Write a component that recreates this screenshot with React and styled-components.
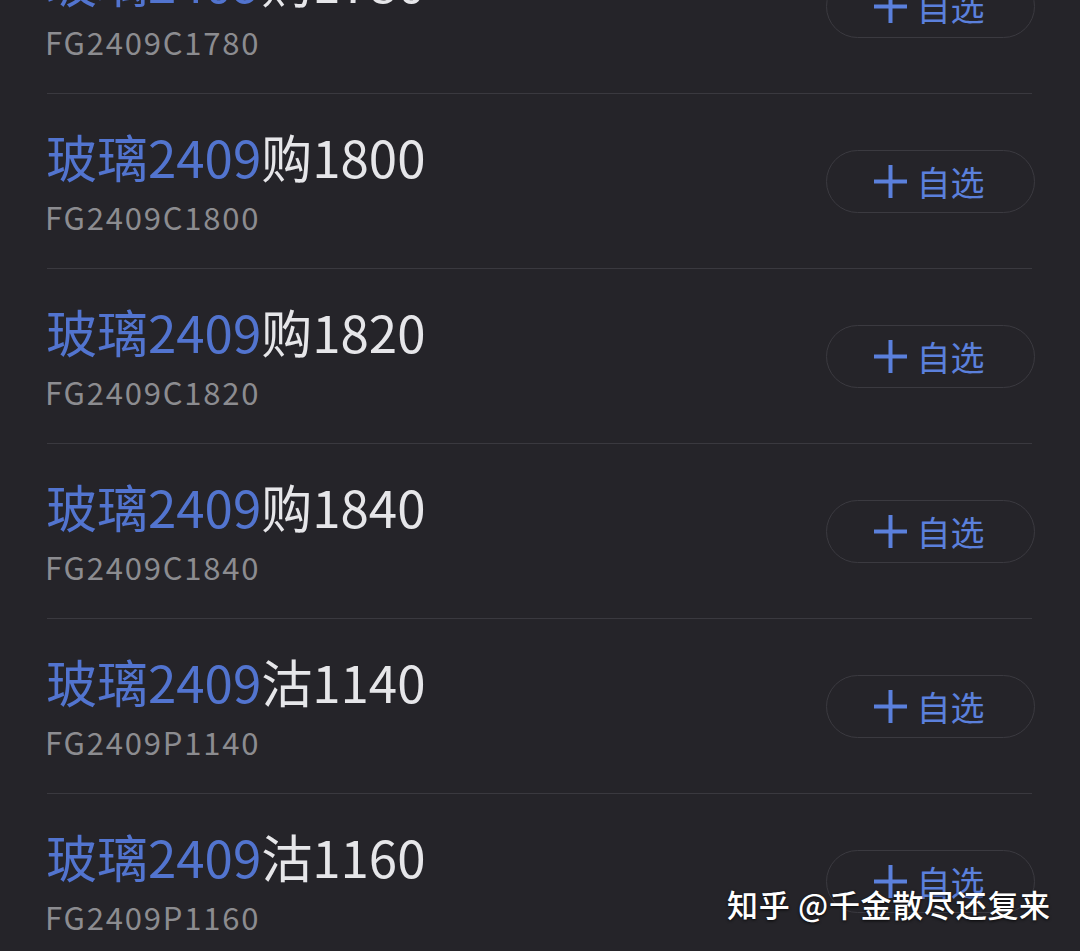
import React from "react";
import styled, { createGlobalStyle } from "styled-components";

const Global = createGlobalStyle`
  html, body { margin: 0; padding: 0; background: #252429; }
  body { overflow: hidden; font-family: "Noto Sans CJK SC", "Noto Sans", sans-serif; }
`;

const Page = styled.div`
  position: relative;
  width: 1080px;
  height: 951px;
  overflow: hidden;
  background: #252429;
`;

const List = styled.div`
  display: flex;
  flex-direction: column;
  margin-top: -81px;
`;

const Row = styled.div`
  display: flex;
  align-items: center;
  justify-content: space-between;
  height: 174px;
  padding: 0 45px 0 46px;
  box-sizing: border-box;
`;

const Divider = styled.div`
  height: 1px;
  margin: 0 48px 0 47px;
  background: #3a393f;
`;

const Info = styled.div`
  display: flex;
  flex-direction: column;
  gap: 17px;
`;

const Title = styled.div`
  font-size: 51px;
  line-height: 54px;
  color: #e6e6e9;
  white-space: nowrap;
`;

const Accent = styled.span`
  color: #5274cf;
`;

const Code = styled.div`
  font-size: 31px;
  line-height: 34px;
  color: #8c8c90;
  letter-spacing: 1.8px;
  margin-left: -1px;
`;

const AddButton = styled.button`
  display: flex;
  align-items: center;
  justify-content: center;
  gap: 9px;
  width: 209px;
  height: 63px;
  border-radius: 32px;
  border: 1.5px solid #3b3a40;
  background: transparent;
  color: #5b80dc;
  font-family: "Noto Sans CJK SC", sans-serif;
  font-size: 34px;
  padding: 0 4px 0 0;
  box-sizing: border-box;
`;

const Watermark = styled.div`
  position: absolute;
  left: 727px;
  top: 884px;
  font-size: 31px;
  font-weight: 500;
  line-height: 40px;
  color: #ffffff;
  white-space: nowrap;
  text-shadow: 0 1px 3px rgba(0,0,0,0.8);
  letter-spacing: 0.7px;
`;

const Plus = () => (
  <svg width="35" height="35" viewBox="0 0 35 35">
    <path d="M17.5 1V34M1 17.5H34" stroke="#5b80dc" strokeWidth="4" fill="none" />
  </svg>
);

const items = [
  ["购", "1780", "FG2409C1780"],
  ["购", "1800", "FG2409C1800"],
  ["购", "1820", "FG2409C1820"],
  ["购", "1840", "FG2409C1840"],
  ["沽", "1140", "FG2409P1140"],
  ["沽", "1160", "FG2409P1160"],
];

export default function App() {
  return (
    <Page>
      <Global />
      <List>
        {items.map(([t, n, code], i) => (
          <React.Fragment key={code}>
            {i > 0 && <Divider />}
            <Row>
              <Info>
                <Title>
                  <Accent>玻璃2409</Accent>
                  {t}
                  {n}
                </Title>
                <Code>{code}</Code>
              </Info>
              <AddButton>
                <Plus />
                <span>自选</span>
              </AddButton>
            </Row>
          </React.Fragment>
        ))}
      </List>
      <Watermark>知乎 @千金散尽还复来</Watermark>
    </Page>
  );
}
